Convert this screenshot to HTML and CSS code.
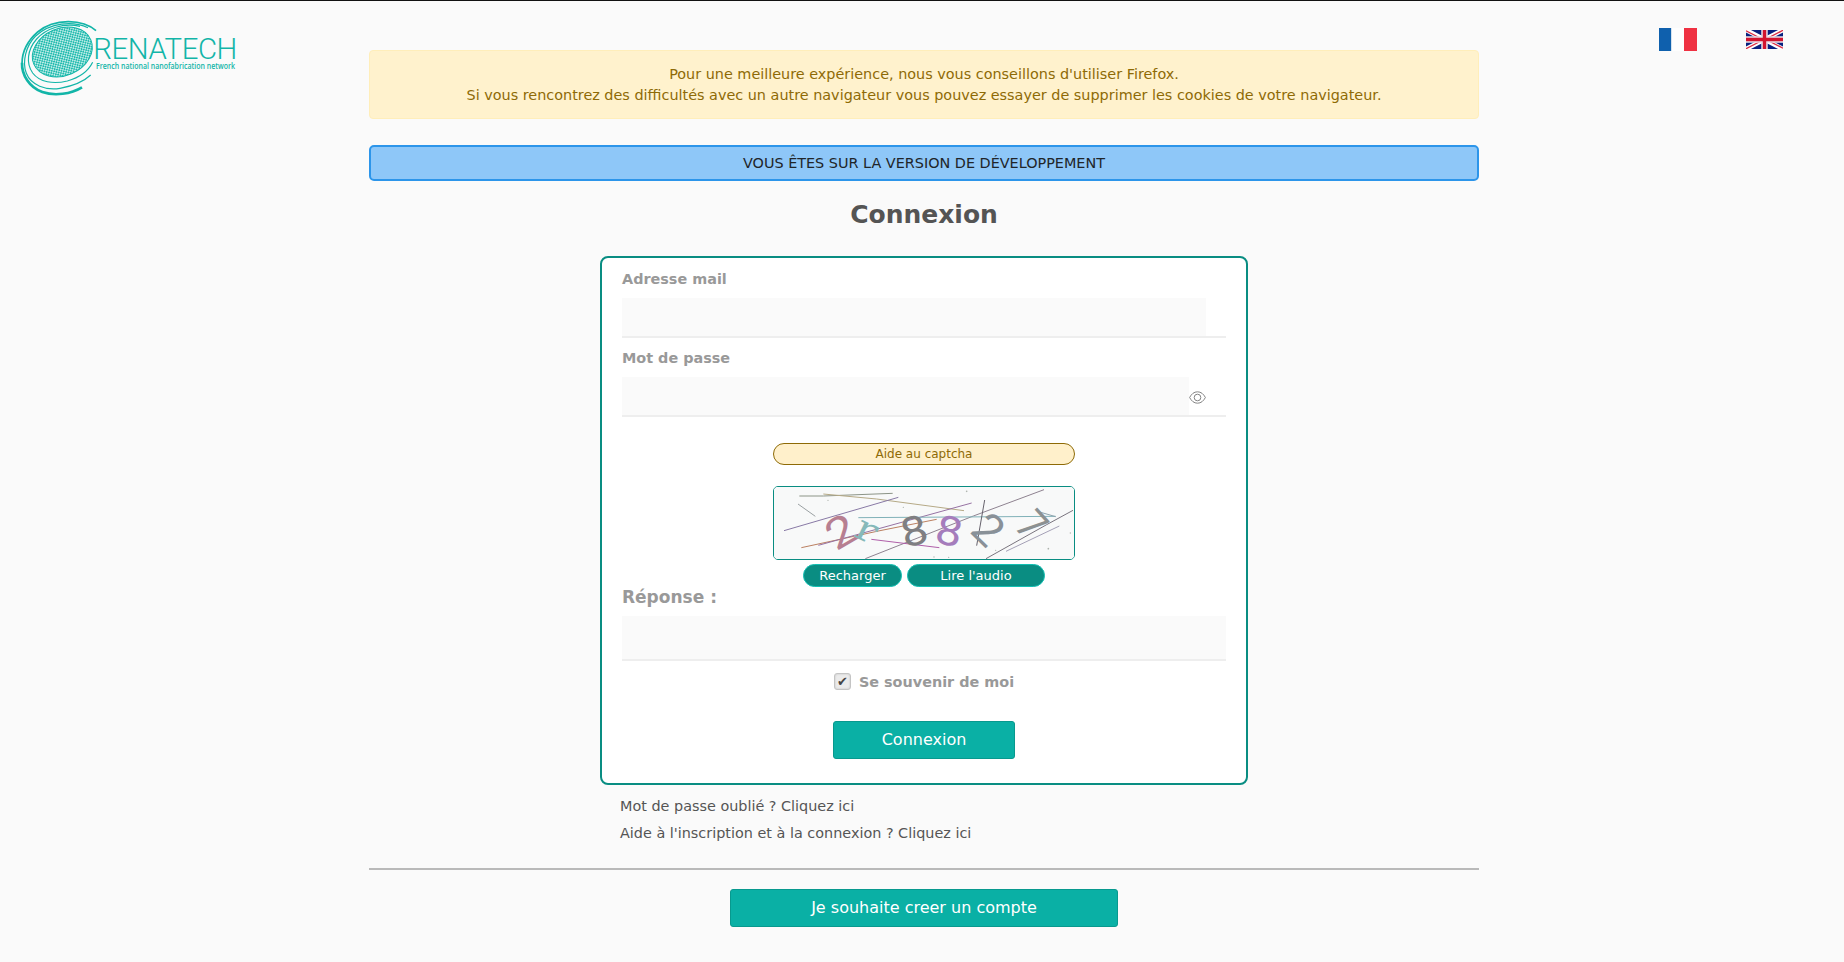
FILE: index.html
```html
<!DOCTYPE html>
<html lang="fr">
<head>
<meta charset="utf-8">
<title>Connexion - Renatech</title>
<link rel="stylesheet" href="styles.css">
</head>
<body>
<div class="page">
  <header class="side">
    <svg class="logo" width="260" height="110" viewBox="0 0 780 330">
      <defs>
        <pattern id="mesh" width="10" height="10" patternUnits="userSpaceOnUse" patternTransform="rotate(-8)">
          <rect width="10" height="10" fill="#22bbae"/>
          <rect width="5" height="5" fill="#b9eae6"/>
          <rect x="5" y="5" width="5" height="5" fill="#b9eae6"/>
        </pattern>
      </defs>
      <g fill="none" stroke="#12b5a8">
        <ellipse cx="187" cy="156" rx="93" ry="71" transform="rotate(-23 187 156)" fill="url(#mesh)" stroke-width="3"/>
        <path d="M288 92C250 58 165 52 113 96C83 122 66 155 66 191" stroke-width="5"/>
        <path d="M66 188C65 225 88 262 127 276C164 289 213 282 246 262" stroke-width="8"/>
        <path d="M264 83C218 62 151 67 107 108C77 137 66 187 79 220C93 256 138 272 180 265C218 258 252 244 272 225" stroke-width="3.500"/>
        <path d="M240 79C190 68 139 85 110 117C81 150 78 191 98 219C119 247 160 253 202 243C239 233 266 211 278 187" stroke-width="3.500"/>
      </g>
      <g fill="#12b5a8">
        <text class="logo-name" x="280" y="176" textLength="432">RENATECH</text>
        <text class="logo-tag" x="288" y="208" textLength="417" lengthAdjust="spacingAndGlyphs">French national nanofabrication network</text>
      </g>
    </svg>
  </header>

  <main class="main">
    <div class="alert">Pour une meilleure expérience, nous vous conseillons d'utiliser Firefox.<br>Si vous rencontrez des difficultés avec un autre navigateur vous pouvez essayer de supprimer les cookies de votre navigateur.</div>
    <div class="dev">VOUS ÊTES SUR LA VERSION DE DÉVELOPPEMENT</div>
    <h1 class="title">Connexion</h1>

    <form class="card">
      <label class="label">Adresse mail</label>
      <div class="field"><span class="entry"></span></div>
      <label class="label">Mot de passe</label>
      <div class="field">
        <span class="entry"></span>
        <svg class="eye" width="17" height="13" viewBox="0 0 17 13" fill="none" stroke="#858585">
          <path d="M.6 6.5C2.5 3 5 .8 8.500 .8S14.500 3 16.400 6.500C14.500 10 12 12.200 8.500 12.200S2.500 10 .6 6.500Z"/>
          <circle cx="8.500" cy="6.500" r="3.300"/>
        </svg>
      </div>

      <div class="help">Aide au captcha</div>
      <div class="captcha">
        <svg width="300" height="72" viewBox="42 171 900 216">
          <rect x="42" y="171" width="900" height="216" fill="#f8f9f9"/>
          <g fill="none" stroke-width="3">
            <path d="M118 198H190L398 190" stroke="#8c9487"/>
            <path d="M190 192L350 207L612 242" stroke="#b5a986"/>
            <path d="M72 302L415 202" stroke="#8879a5"/>
            <path d="M114 222L166 259" stroke="#9aa0a2"/>
            <path d="M124 353L360 302L530 268" stroke="#bb8061"/>
            <path d="M175 346L635 219" stroke="#9672a2"/>
            <path d="M316 386L640 258L852 179" stroke="#8e8290"/>
            <path d="M295 263L887 259" stroke="#80b1b8"/>
            <path d="M334 328L538 353" stroke="#b05fa9"/>
            <path d="M674 210L650 347" stroke="#65616b"/>
            <path d="M678 386L860 284L939 241" stroke="#79747e"/>
            <path d="M738 364L898 288" stroke="#a4a0b6"/>
            <path d="M832 244L887 260" stroke="#8da3ad"/>
          </g>
          <g class="digits">
            <text transform="translate(243 304) rotate(-30) scale(1.300 1.080)" y="42" fill="#b77f91">2</text>
            <text class="serif" transform="translate(318 304) rotate(26) scale(1.200 1)" y="30" fill="#86b9ba">r</text>
            <text transform="translate(462 302) rotate(-14) scale(1.200 1.040)" y="42" fill="#7f7f82">8</text>
            <text transform="translate(568 302) rotate(12) scale(1.200 1.040)" y="42" fill="#a57dbc">8</text>
            <text transform="translate(686 298) rotate(44) scale(1.150 1.120)" y="42" fill="#899198">2</text>
            <text transform="translate(816 285) rotate(48) scale(1 1.100)" y="42" fill="#8c9192">7</text>
          </g>
          <g fill="#adb3ad"><circle cx="620" cy="184" r="2.500"/><circle cx="204" cy="211" r="2"/><circle cx="430" cy="232" r="2"/><circle cx="865" cy="356" r="2.500"/><circle cx="707" cy="361" r="2"/><circle cx="566" cy="382" r="2"/><circle cx="522" cy="381" r="2"/><circle cx="931" cy="309" r="2"/></g>
        </svg>
      </div>
      <div class="tools"><span class="pill reload">Recharger</span><span class="pill audio">Lire l'audio</span></div>
      <label class="label answer">Réponse :</label>
      <div class="field tall"></div>

      <div class="remember"><span class="check">✔</span><span>Se souvenir de moi</span></div>
      <div class="btn login">Connexion</div>
    </form>

    <nav class="links"><a>Mot de passe oublié ? Cliquez ici</a><a>Aide à l'inscription et à la connexion ? Cliquez ici</a></nav>
    <div class="rule"></div>
    <div class="btn create">Je souhaite creer un compte</div>
  </main>

  <aside class="side flags">
    <svg width="38" height="23" viewBox="0 0 38 23"><rect width="38" height="23" fill="#fefefe"/><rect width="12" height="23" fill="#0f60ad"/><rect x="12" width="1" height="23" fill="#d5e2ee"/><rect x="25" width="13" height="23" fill="#ef3142"/></svg>
    <svg class="uk" width="37" height="19" viewBox="0 0 37 19">
      <rect width="37" height="19" fill="#08207f"/>
      <path d="M0 0L37 19M37 0L0 19" stroke="#fff" stroke-width="4.500"/>
      <path d="M0 .8L16 9M21 10L37 18.200M37 .3L21 8.500M16 10.500L0 18.700" stroke="#dc2c43" stroke-width="1.400"/>
      <path d="M18.500 0V19M0 9.500H37" stroke="#e8dfe8" stroke-width="6.500"/>
      <path d="M18.500 0V19M0 9.500H37" stroke="#d1142f" stroke-width="3.400"/>
    </svg>
  </aside>
</div>
</body>
</html>
```
FILE: styles.css
```css
* { box-sizing: border-box; }
body {
  margin: 0;
  background: #fafafa;
  color: #212529;
  font-family: "DejaVu Sans", sans-serif;
  font-size: 14.4px;
  line-height: 1.5;
}
.page {
  display: grid;
  grid-template-columns: 369px 1110px 365px;
  height: 962px;
  overflow: hidden;
  border-top: 1px solid #111;
}
svg { display: block; }
.logo { margin-top: -1px; }
.logo-name { font-family: Roboto, sans-serif; font-weight: 300; font-size: 88px; }
.logo-tag { font-family: "Open Sans", sans-serif; font-weight: 600; font-size: 24px; }
.flags { display: flex; align-items: flex-start; gap: 49px; padding: 27px 0 0 180px; }
.uk { margin-top: 2px; }

.main { display: flex; flex-direction: column; align-items: center; padding-top: 49px; }
.alert {
  width: 100%;
  height: 69px;
  padding: 13px 20px 11px;
  border: 1px solid #ffeeba;
  border-radius: 4px;
  background: #fff2cd;
  color: #8e6a06;
  line-height: 21px;
  text-align: center;
}
.dev {
  width: 100%;
  height: 36px;
  margin-top: 26px;
  border: 2px solid #2c95ea;
  border-radius: 5px;
  background: #8ec7f8;
  line-height: 32px;
  text-align: center;
}
.title { margin: 19px 0 0; height: 30px; color: #545454; font-size: 25px; line-height: 30px; }

.card {
  display: flex;
  flex-direction: column;
  width: 648px;
  height: 529px;
  margin-top: 26px;
  padding: 10px 20px 0;
  border: 2px solid #098d82;
  border-radius: 8px;
  background: #fff;
}
.label { height: 30px; color: #999; font-weight: bold; line-height: 22px; }
.label + .field + .label { margin-top: 9px; }
.field { display: flex; align-items: center; height: 40px; padding-right: 20px; border-bottom: 2px solid #eee; }
.entry { flex: 1; height: 38px; background: #fafafa; }
.eye { margin-top: 2px; }
.help {
  align-self: center;
  width: 302px;
  height: 22px;
  margin-top: 26px;
  border: 1px solid #8e6a06;
  border-radius: 11px;
  background: #fff0cb;
  color: #8e6a06;
  font-size: 12px;
  line-height: 20px;
  text-align: center;
}
.captcha { align-self: center; margin-top: 21px; border: 1px solid #098d82; border-radius: 5px; overflow: hidden; }
.digits { font-family: Roboto, sans-serif; font-size: 118px; text-anchor: middle; }
.serif { font-family: "DejaVu Serif", serif; font-size: 108px; }
.tools { display: flex; align-self: center; gap: 5px; margin-top: 4px; }
.pill {
  height: 23px;
  border: 1px solid #12c0b3;
  border-radius: 12px;
  background: #0a8d82;
  color: #fff;
  font-size: 13px;
  line-height: 22px;
  text-align: center;
}
.reload { width: 99px; }
.audio { width: 138px; }
.answer { height: 29px; font-size: 17px; line-height: 20px; }
.tall { height: 45px; background: #fafafa; }
.remember { display: flex; align-self: center; gap: 8px; margin-top: 12px; height: 17px; color: #999; font-weight: bold; line-height: 19px; }
.check {
  width: 17px;
  height: 17px;
  border: 1px solid #c4c4c4;
  border-radius: 3px;
  background: #ebebeb;
  box-shadow: inset 0 0 2px #bbb;
  color: #444;
  font-size: 13px;
  font-weight: normal;
  line-height: 15px;
  text-align: center;
}
.btn {
  height: 38px;
  border: 1px solid #08998e;
  border-radius: 3px;
  background: #0ab0a5;
  color: #fff;
  font-size: 16px;
  line-height: 36px;
  text-align: center;
}
.login { align-self: center; width: 182px; margin-top: 31px; }
.links { display: flex; flex-direction: column; align-self: flex-start; margin: 8px 0 0 251px; color: #555; line-height: 27px; }
.rule { width: 100%; height: 2px; margin-top: 21px; background: #b9b9b9; }
.create { width: 388px; margin-top: 19px; }
```
